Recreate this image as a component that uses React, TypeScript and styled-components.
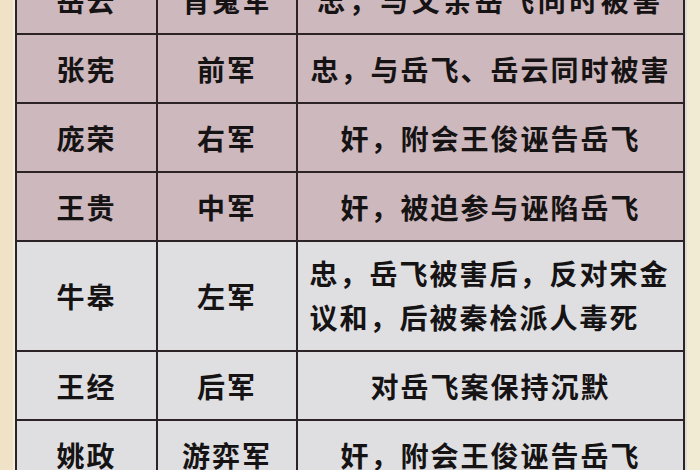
import { Fragment } from 'react';
import styled, { createGlobalStyle } from 'styled-components';

const GlobalStyle = createGlobalStyle`
  html, body {
    margin: 0;
    padding: 0;
    background: #f2ebd3;
    overflow: hidden;
  }
  body {
    font-family: "Noto Sans CJK SC", "Noto Sans", sans-serif;
  }
`;

const Page = styled.div`
  display: flex;
  width: 700px;
  height: 470px;
  overflow: hidden;
  background: linear-gradient(90deg, #efe2c6 0, #efe2c6 13px, #f6efdc 13px, #f6efdc 15px, #f2ebd3 15px);
`;

const Table = styled.div`
  margin: -36px 0 0 15px;
  width: 670px;
  align-self: flex-start;
  display: grid;
  grid-template-columns: 139px 138px 1fr;
  gap: 2px;
  padding: 2px;
  background: #2b2326;
  box-sizing: border-box;
  box-shadow: 2px 0 0 #dcdcd8;
`;

const Cell = styled.div<{ $tone: 'pink' | 'gray'; $tall?: boolean; $wide?: boolean }>`
  height: ${({ $tall }) => ($tall ? '108px' : '67px')};
  background: ${({ $tone }) => ($tone === 'pink' ? '#cdb8bd' : '#dfdfe2')};
  display: flex;
  align-items: center;
  justify-content: center;
  font-size: 28px;
  font-weight: 700;
  letter-spacing: ${({ $wide }) => ($wide ? '3.5px' : '2px')};
  color: #161314;
  white-space: nowrap;
`;

// wrapped text keeps its second line flush with the first
const Lines = styled.span`
  display: inline-block;
  width: 362px;
  text-align: left;
  line-height: 44px;
  white-space: normal;
  margin-top: -2px;
`;

type Row = { name: string; post: string; fate: string; tone: 'pink' | 'gray'; tall?: boolean; wide?: boolean };

const rows: Row[] = [
  { name: '岳云', post: '背嵬军', fate: '忠，与父亲岳飞同时被害', tone: 'pink', wide: true },
  { name: '张宪', post: '前军', fate: '忠，与岳飞、岳云同时被害', tone: 'pink' },
  { name: '庞荣', post: '右军', fate: '奸，附会王俊诬告岳飞', tone: 'pink' },
  { name: '王贵', post: '中军', fate: '奸，被迫参与诬陷岳飞', tone: 'pink' },
  { name: '牛皋', post: '左军', fate: '忠，岳飞被害后，反对宋金议和，后被秦桧派人毒死', tone: 'gray', tall: true },
  { name: '王经', post: '后军', fate: '对岳飞案保持沉默', tone: 'gray' },
  { name: '姚政', post: '游弈军', fate: '奸，附会王俊诬告岳飞', tone: 'gray' },
];

export default function App() {
  return (
    <>
      <GlobalStyle />
      <Page>
        <Table>
          {rows.map(row => (
            <Fragment key={row.name}>
              <Cell $tone={row.tone} $tall={row.tall}>
                {row.name}
              </Cell>
              <Cell $tone={row.tone} $tall={row.tall}>
                {row.post}
              </Cell>
              <Cell $tone={row.tone} $tall={row.tall} $wide={row.wide}>
                {row.tall ? <Lines>{row.fate}</Lines> : row.fate}
              </Cell>
            </Fragment>
          ))}
        </Table>
      </Page>
    </>
  );
}
